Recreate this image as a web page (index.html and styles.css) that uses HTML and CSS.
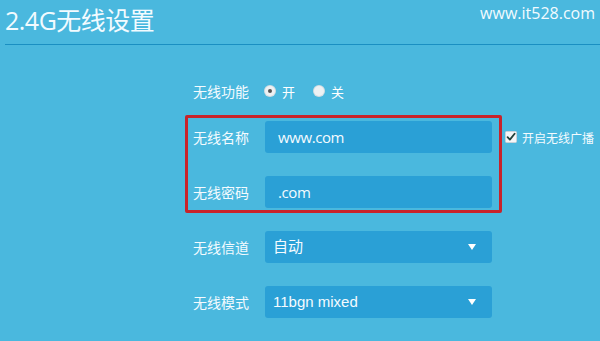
FILE: index.html
```html
<!DOCTYPE html>
<html lang="zh-CN">
<head>
<meta charset="utf-8">
<title>2.4G无线设置</title>
<link rel="stylesheet" href="styles.css">
</head>
<body>
<div class="page">
  <header class="header">
    <h1 class="title">2.4G无线设置</h1>
    <span class="watermark">www.it528.com</span>
  </header>
  <main class="form">
    <div class="row row-radio">
      <span class="label">无线功能</span>
      <span class="radio checked"></span><span class="radio-text">开</span>
      <span class="radio"></span><span class="radio-text">关</span>
    </div>
    <div class="row row-first">
      <span class="label">无线名称</span>
      <div class="field">www.com</div>
      <span class="check">
        <svg width="12" height="12" viewBox="0 0 12 12"><rect x="0.5" y="0.5" width="11" height="11" rx="1" fill="#f4f6f8" stroke="#c9d3da"/><path d="M2.6 6.2 L4.9 8.6 L9.6 2.8" fill="none" stroke="#23413a" stroke-width="1.8" stroke-linecap="round" stroke-linejoin="round"/></svg>
      </span>
      <span class="check-text">开启无线广播</span>
    </div>
    <div class="row">
      <span class="label">无线密码</span>
      <div class="field">.com</div>
    </div>
    <div class="row">
      <span class="label">无线信道</span>
      <div class="field select">自动<span class="arrow"></span></div>
    </div>
    <div class="row">
      <span class="label">无线模式</span>
      <div class="field select">11bgn mixed<span class="arrow"></span></div>
    </div>
    <div class="highlight"></div>
  </main>
</div>
</body>
</html>
```

FILE: styles.css
```css
html, body {
  margin: 0;
  padding: 0;
  background: #4ab8de;
}
body {
  width: 600px;
  height: 341px;
  overflow: hidden;
  font-family: "Open Sans", "Noto Sans CJK SC", sans-serif;
  color: #ffffff;
}
.page {
  position: relative;
}
.header {
  position: relative;
  height: 44px;
  margin-left: 5px;
  border-bottom: 1px solid #1a8fc2;
}
.title {
  margin: 0;
  padding-top: 3px;
  font-weight: 400;
  font-size: 25px;
  line-height: 34px;
  color: #f2fbff;
  letter-spacing: -0.5px;
}
.watermark {
  position: absolute;
  right: 5px;
  top: 1px;
  font-size: 16px;
  line-height: 24px;
  color: #f2fbff;
}
.form {
  position: relative;
  padding: 30px 0 0 193px;
}
.row {
  display: flex;
  align-items: center;
  height: 32px;
  margin-top: 23px;
}
.row-radio {
  margin-top: 0;
}
.row-first {
  margin-top: 14px;
}
.label {
  width: 72px;
  font-family: "Noto Sans CJK SC", sans-serif;
  font-size: 14px;
  color: #f4fbff;
  flex: none;
}
.radio {
  width: 10px;
  height: 10px;
  border-radius: 50%;
  background: #eef1f3;
  margin-left: 0;
  position: relative;
  flex: none;
  box-shadow: 0 0 0 1px #d4dde2;
}
.radio.checked::after {
  content: "";
  position: absolute;
  left: 3px;
  top: 3px;
  width: 4px;
  height: 4px;
  border-radius: 50%;
  background: #555;
}
.radio-text {
  font-family: "Noto Sans CJK SC", sans-serif;
  font-size: 13px;
  margin-left: 7px;
  margin-right: 19px;
}
.field {
  position: relative;
  box-sizing: border-box;
  width: 227px;
  height: 32px;
  border-radius: 3px;
  background: #2aa0d6;
  padding-left: 13px;
  font-size: 15px;
  line-height: 32px;
  color: #f4fbff;
  font-family: "Open Sans", "Noto Sans CJK SC", sans-serif;
  letter-spacing: -0.4px;
}
.select {
  padding-left: 8px;
  font-family: "Liberation Sans", "Noto Sans CJK SC", sans-serif;
  letter-spacing: 0;
}
.arrow {
  position: absolute;
  right: 16px;
  top: 13px;
  width: 0;
  height: 0;
  border-left: 4.5px solid transparent;
  border-right: 4.5px solid transparent;
  border-top: 6px solid #ffffff;
}
.check {
  display: flex;
  margin-left: 13px;
}
.check-text {
  margin-left: 5px;
  font-family: "Noto Sans CJK SC", sans-serif;
  font-size: 12px;
  color: #f4fbff;
}
.highlight {
  position: absolute;
  left: 185px;
  top: 70px;
  width: 311px;
  height: 92px;
  border: 3px solid #c8232b;
  border-radius: 2px;
}
```
